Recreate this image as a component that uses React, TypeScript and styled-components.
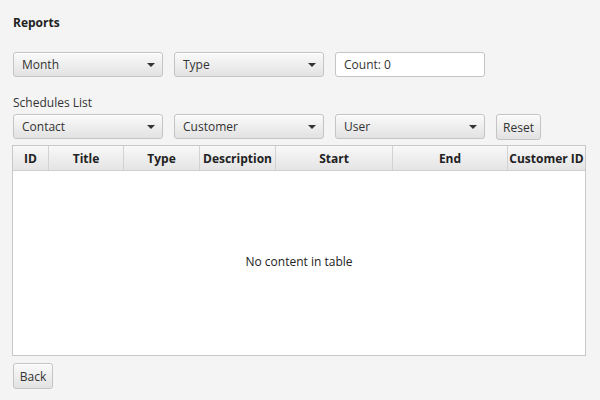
import React from "react";
import styled, { createGlobalStyle } from "styled-components";

const Global = createGlobalStyle`
  html, body { margin: 0; padding: 0; background: #f4f4f4; }
  body { font-family: "Open Sans", "Noto Sans", sans-serif; font-size: 12px; color: #333; }
`;

const Page = styled.div`
  width: 600px;
  height: 400px;
  box-sizing: border-box;
  padding: 14px 15px 0 12px;
  display: flex;
  flex-direction: column;
`;

const Title = styled.div`
  font-weight: 700;
  font-size: 12px;
  color: #222;
  height: 18px;
  line-height: 18px;
  padding-left: 1px;
`;

const Row = styled.div<{ $top: number }>`
  display: flex;
  gap: 11px;
  margin-top: ${(p) => p.$top}px;
  padding-left: 1px;
`;

const Combo = styled.div`
  width: 150px;
  height: 25px;
  box-sizing: border-box;
  border: 1px solid #c4c4c4;
  border-radius: 3px;
  background: linear-gradient(#fafafa, #e2e2e2);
  box-shadow: inset 0 1px 0 #fff;
  display: flex;
  align-items: center;
  justify-content: space-between;
  padding: 0 7px 0 8px;
  color: #333;
`;

const Arrow = styled.span`
  width: 0;
  height: 0;
  border-left: 4px solid transparent;
  border-right: 4px solid transparent;
  border-top: 4px solid #333;
`;

const Field = styled.div`
  width: 150px;
  height: 25px;
  box-sizing: border-box;
  border: 1px solid #c4c4c4;
  border-radius: 3px;
  background: #fff;
  display: flex;
  align-items: center;
  padding: 0 8px;
  color: #333;
`;

const Button = styled.div<{ $w: number }>`
  width: ${(p) => p.$w}px;
  height: 26px;
  box-sizing: border-box;
  border: 1px solid #c4c4c4;
  border-radius: 3px;
  background: linear-gradient(#fafafa, #e2e2e2);
  box-shadow: inset 0 1px 0 #fff;
  display: flex;
  align-items: center;
  justify-content: center;
  color: #333;
`;

const Label = styled.div`
  margin-top: 19px;
  height: 14px;
  line-height: 14px;
  padding-left: 1px;
  color: #333;
`;

const Table = styled.div`
  margin-top: 5px;
  width: 574px;
  height: 211px;
  box-sizing: border-box;
  border: 1px solid #c8c8c8;
  background: #fff;
  display: flex;
  flex-direction: column;
`;

const Header = styled.div`
  display: grid;
  grid-template-columns: 36px 75px 76px 76px 117px 115px 1fr;
  height: 24px;
  border-bottom: 1px solid #d0d0d0;
  background: linear-gradient(#f8f8f8, #e4e4e4);
`;

const HeadCell = styled.div`
  border-right: 1px solid #d2d2d2;
  display: flex;
  align-items: center;
  justify-content: center;
  font-weight: 700;
  color: #222;
  white-space: nowrap;
  &:last-child { border-right: none; }
`;

const Empty = styled.div`
  flex: 1;
  display: flex;
  align-items: center;
  justify-content: center;
  color: #222;
  padding-bottom: 4px;
`;

const BackRow = styled.div`
  margin-top: 7px;
  padding-left: 1px;
`;

const columns = ["ID", "Title", "Type", "Description", "Start", "End", "Customer ID"];

export default function App() {
  return (
    <>
      <Global />
      <Page>
        <Title>Reports</Title>
        <Row $top={20}>
          <Combo>Month<Arrow /></Combo>
          <Combo>Type<Arrow /></Combo>
          <Field>Count: 0</Field>
        </Row>
        <Label>Schedules List</Label>
        <Row $top={4}>
          <Combo>Contact<Arrow /></Combo>
          <Combo>Customer<Arrow /></Combo>
          <Combo>User<Arrow /></Combo>
          <Button $w={45}>Reset</Button>
        </Row>
        <Table>
          <Header>
            {columns.map((c) => (
              <HeadCell key={c}>{c}</HeadCell>
            ))}
          </Header>
          <Empty>No content in table</Empty>
        </Table>
        <BackRow>
          <Button $w={40}>Back</Button>
        </BackRow>
      </Page>
    </>
  );
}
